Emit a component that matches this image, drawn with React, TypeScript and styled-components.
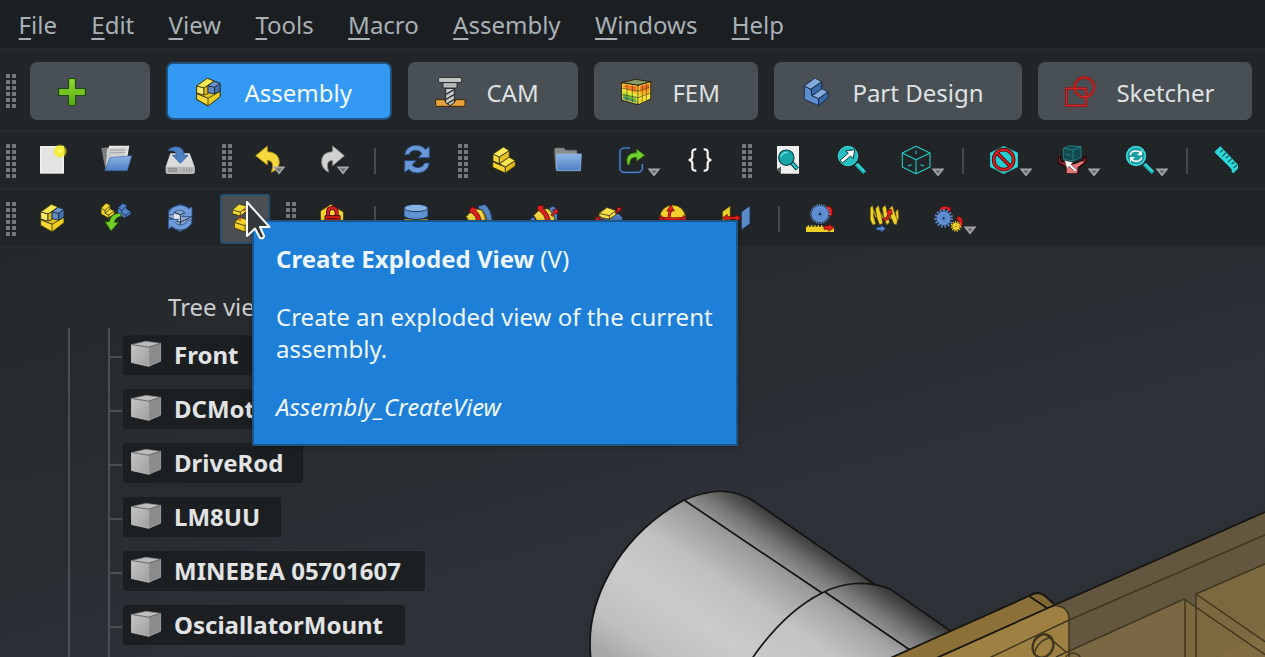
import React from 'react';
import styled, { createGlobalStyle, css } from 'styled-components';

const GlobalStyle = createGlobalStyle`
  * { box-sizing: border-box; }
  html, body { margin: 0; padding: 0; background: #212528; }
  body { overflow: hidden; }
`;

const Window = styled.div`
  position: relative;
  width: 1265px;
  height: 657px;
  overflow: hidden;
  display: flex;
  flex-direction: column;
  background: #212528;
  color: #dfe1e3;
  font-family: 'Noto Sans', sans-serif;
  font-size: 24px;
`;

const MenuBar = styled.nav`
  flex: none;
  height: 50px;
  display: flex;
  align-items: center;
  gap: 34.3px;
  padding: 0 0 0 18.6px;
  background: #1b1f22;
  border-bottom: 2px solid #25292b;
  color: #a9b0b6;
`;

const MenuItem = styled.span`
  line-height: 33px;
  white-space: nowrap;
`;

const Mnemonic = styled.span`
  text-decoration: underline;
  text-decoration-thickness: 2px;
  text-underline-offset: 4px;
  text-decoration-skip-ink: none;
`;

const ToolBar = styled.div<{ $height: number }>`
  flex: none;
  display: flex;
  align-items: center;
  height: ${(p) => p.$height}px;
  padding: 2px 0 0 6px;
  border-bottom: 2px solid #282c2f;
`;

const Grip = styled.div<{ $gap?: number }>`
  flex: none;
  width: 10px;
  height: 34px;
  margin-left: ${(p) => p.$gap ?? 0}px;
  background: repeating-linear-gradient(90deg, #74797b 0 4px, transparent 4px 6px);
  mask-image: repeating-linear-gradient(180deg, #000 0 4px, transparent 4px 6px);
`;

const Divider = styled.div<{ $gap: number }>`
  flex: none;
  width: 2px;
  height: 26px;
  margin-left: ${(p) => p.$gap}px;
  background: #484c4f;
`;

const WorkbenchTab = styled.button<{ $width: number; $active?: boolean; $gap?: number }>`
  flex: none;
  display: flex;
  align-items: center;
  gap: 21.4px;
  width: ${(p) => p.$width}px;
  height: 58px;
  margin: 0 0 0 ${(p) => p.$gap ?? 16}px;
  padding: 2px 0 0 27px;
  border: 0;
  border-radius: 7px;
  background: #495055;
  color: #dfe1e3;
  font: inherit;
  text-align: left;
  white-space: nowrap;
  ${(p) =>
    p.$active &&
    css`
      border: 2px solid #20517a;
      padding-left: 25px;
      background: #3399f2;
      color: #f4faff;
    `}
`;

const TabLabel = styled.span`
  line-height: 33px;
`;

const ToolButton = styled.button<{ $gap?: number; $hover?: boolean }>`
  position: relative;
  flex: none;
  display: flex;
  align-items: center;
  justify-content: center;
  width: 50px;
  height: 50px;
  margin: 0 0 0 ${(p) => p.$gap ?? 14}px;
  padding: 0 0 2px;
  border: 2px solid ${(p) => (p.$hover ? '#24506f' : 'transparent')};
  border-radius: 3px;
  background: ${(p) => (p.$hover ? '#4a4f54' : 'transparent')};
`;

const MenuArrow = styled.svg<{ $left: number; $top: number }>`
  position: absolute;
  left: ${(p) => p.$left}px;
  top: ${(p) => p.$top}px;
  width: 14px;
  height: 9px;
`;

const Svg = styled.svg`
  flex: none;
  display: block;
  width: 30px;
  height: 30px;
  overflow: visible;
`;

const Viewport = styled.main`
  position: relative;
  flex: 1;
  display: flex;
  flex-direction: column;
  background: linear-gradient(165deg, #24282a 0%, #272b2d 22%, #2a2e33 45%, #2d3138 62%, #2c3236 100%);
`;

const Scene = styled.svg`
  position: absolute;
  inset: 0;
  width: 1265px;
  height: 409px;
`;

const TreeTitle = styled.div`
  position: relative;
  height: 80px;
  padding: 42px 0 0 168px;
  line-height: 33px;
  color: #c9cccf;
`;

const TreeTrunk = styled.div`
  position: relative;
  flex: 1;
  display: flex;
  margin-left: 68px;
  border-left: 2px solid #4b4f54;
  padding-left: 38px;
`;

const TreeBranch = styled.div`
  flex: 1;
  display: flex;
  flex-direction: column;
  border-left: 2px solid #4b4f54;
`;

const TreeRow = styled.div`
  flex: none;
  height: 54px;
  display: flex;
  align-items: center;
  &::before {
    content: '';
    width: 12px;
    height: 2px;
    margin: 4px 1px 0 0;
    background: #4b4f54;
  }
`;

const TreeChip = styled.div<{ $width: number }>`
  display: flex;
  align-items: center;
  width: ${(p) => p.$width}px;
  height: 40px;
  gap: 13px;
  padding-left: 8px;
  border-radius: 3px;
  background: #1b1f21;
`;

const TreeLabel = styled.span`
  margin-bottom: 2px;
  color: #e2e3e4;
  font-weight: 700;
  line-height: 33px;
  white-space: nowrap;
`;

const Tooltip = styled.div`
  position: absolute;
  left: 252px;
  top: 220px;
  width: 486px;
  height: 226px;
  padding: 21px 20px 0 22px;
  border: 2px solid #1f5585;
  background: #1d7fd7;
  color: #eef7ff;
  line-height: 32px;
  box-shadow: 0 1px 5px rgba(0, 0, 0, 0.3);
`;

const TipText = styled.p`
  margin: 0 0 26px;
`;

const Cursor = styled.svg`
  position: absolute;
  left: 244px;
  top: 198px;
  width: 30px;
  height: 44px;
  overflow: visible;
`;

type IconProps = { x: number; y?: number; children: React.ReactNode };

/* Icon artwork is drawn on a 90-unit square whose origin is given by x and y. */
const Icon = ({ x, y = 45, children }: IconProps) => (
  <Svg viewBox={`${x} ${y} 90 90`}>{children}</Svg>
);

const Arrow = ({ left = 39, top = 30 }: { left?: number; top?: number }) => (
  <MenuArrow $left={left} $top={top} viewBox="0 0 14 9">
    <path d="M0.5 0.5H13.5L7 8.6Z" fill="#a5a7a8" />
    <path d="M4 2.3H10L7 6Z" fill="#6d7072" />
  </MenuArrow>
);

const LBlock = ({ top, front, side, line }: { top: string; front: string; side: string; line: string }) => (
  <g stroke={line} strokeWidth="0.8" strokeLinejoin="round" transform="scale(3)">
    <path d="M3.3 9L10 12.3L11 18.7L17.7 21.7V28.7L3.3 22.3Z" fill={front} />
    <path d="M3.3 9L14 1L20.7 4.7L10 12.3Z" fill={top} />
    <path d="M10 12.3L20.7 4.7V12L11 18.7Z" fill={side} />
    <path d="M11 18.7L21 11.8L27 15L17.7 21.7Z" fill={top} />
    <path d="M17.7 21.7L27 15V20.7L17.7 28.7Z" fill={side} />
  </g>
);

/* Yellow part made of two stacked blocks. */
const PartArt = () => (
  <g stroke="#332d08" strokeWidth="2.4" strokeLinejoin="round">
    <path d="M14 50L34 59L52 66V84L14 67Z" fill="#f2d32d" />
    <path d="M34 56L63 36L82 47L52 66Z" fill="#f8e550" />
    <path d="M52 66L82 47V63L52 84Z" fill="#ddb91c" />
    <path d="M15 27L34 36V56L15 48Z" fill="#f6da38" />
    <path d="M15 27L46 6L64 17L34 36Z" fill="#faea5c" />
    <path d="M34 36L64 17V36L34 56Z" fill="#e3c222" />
  </g>
);

const AssemblyArt = () => (
  <g stroke="#2c2a0c" strokeWidth="2.4" strokeLinejoin="round">
    <path d="M11 27L43 4L81 19V59L45 87L11 67Z" fill="#e6c722" />
    <path d="M11 27L43 4L63 12L33 33Z" fill="#faec52" />
    <path d="M11 27L33 33V54L11 48Z" fill="#f9e76a" />
    <path d="M33 33L45 25V50L33 54Z" fill="#e0c020" />
    <path d="M11 50L45 64L81 43V59L45 87L11 67Z" fill="#f0cf25" />
    <path d="M11 50L45 64V86L11 67Z" fill="#f6d836" />
    <path d="M45 27L63 13L81 19L65 31Z" fill="#6d94cc" stroke="#142338" />
    <path d="M45 27L65 31V51L45 47Z" fill="#6189c4" stroke="#142338" />
    <path d="M65 31L81 19V42L65 51Z" fill="#4570ad" stroke="#142338" />
  </g>
);

const PlusIcon = () => (
  <Icon x={171} y={231}>
    <defs>
      <linearGradient id="plus" x1="0" y1="0" x2="0" y2="1">
        <stop offset="0" stopColor="#97dc3c" />
        <stop offset="1" stopColor="#55a708" />
      </linearGradient>
    </defs>
    <path d="M206 236H226V266H256V286H226V316H206V286H176V266H206Z" fill="url(#plus)" stroke="#1d4a06" strokeWidth="4" />
    <path d="M209 239H223V269H253V283H223V313H209V283H179V269H209Z" fill="none" stroke="#8ee23a" strokeWidth="1.6" />
  </Icon>
);

const CamIcon = () => (
  <Icon x={105} y={231}>
    <path d="M107 299H195V319H107Z" fill="#e9a23b" stroke="#3a2405" strokeWidth="3" />
    <path d="M131 299L138 310L150 318L163 310L170 299Z" fill="#4a3a22" />
    <path d="M137 265H163V308L150 317L137 308Z" fill="#c9ccca" stroke="#24282a" strokeWidth="3" />
    <path d="M138 283L162 269M138 298L162 284M142 311L162 299" stroke="#2c3032" strokeWidth="4" />
    <path d="M129 248H171V264H129Z" fill="#c3c6c4" stroke="#24282a" strokeWidth="3" />
    <path d="M116 233H184V247H116Z" fill="#e1e3e1" stroke="#24282a" strokeWidth="3" />
    <path d="M121 240H179M134 256H166" stroke="#9ea3a1" strokeWidth="3" />
  </Icon>
);

const FemIcon = () => (
  <Icon x={663} y={231}>
    <defs>
      <linearGradient id="femL" x1="0.6" y1="0" x2="0.3" y2="1">
        <stop offset="0" stopColor="#f3301a" />
        <stop offset="0.25" stopColor="#ff7a1c" />
        <stop offset="0.45" stopColor="#f3ee3a" />
        <stop offset="0.65" stopColor="#6bc23a" />
        <stop offset="0.85" stopColor="#2d5c9c" />
      </linearGradient>
      <linearGradient id="femR" x1="0" y1="0" x2="0" y2="1">
        <stop offset="0" stopColor="#f0351c" />
        <stop offset="0.4" stopColor="#ff9a1c" />
        <stop offset="0.7" stopColor="#f7ee3a" />
        <stop offset="1" stopColor="#d5b01e" />
      </linearGradient>
    </defs>
    <path d="M665 248L707 238L752 245L714 256Z" fill="#8b9a68" stroke="#26240a" strokeWidth="3" />
    <path d="M665 248L714 256V314L665 301Z" fill="url(#femL)" stroke="#26240a" strokeWidth="3" />
    <path d="M714 256L752 245V297L714 314Z" fill="url(#femR)" stroke="#26240a" strokeWidth="3" />
    <path d="M668 252L711 259V310L668 298Z" fill="none" stroke="#f5e544" strokeWidth="3" />
    <path d="M717 259L749 249V295L717 310Z" fill="none" stroke="#f5e544" strokeWidth="3" />
    <path d="M681 252V303M697 254V307M667 265L714 273L751 261M727 254V307M739 251V302M667 284L714 293L751 279" fill="none" stroke="#37320c" strokeWidth="1.6" />
  </Icon>
);

const SketchIcon = () => (
  <Icon x={915} y={81}>
    <g fill="none">
      <path d="M919 115H978V167H919Z" stroke="#9c0c0c" strokeWidth="7" />
      <circle cx="973" cy="112" r="29.5" stroke="#9c0c0c" strokeWidth="7" />
      <path d="M919 115H978V167H919Z" stroke="#f22c2c" strokeWidth="2.8" />
      <circle cx="973" cy="112" r="29.5" stroke="#f22c2c" strokeWidth="2.8" />
    </g>
  </Icon>
);

const NewIcon = () => (
  <Icon x={111}>
    <defs>
      <radialGradient id="glow">
        <stop offset="0" stopColor="#fffb8a" />
        <stop offset="0.5" stopColor="#f7ee26" />
        <stop offset="0.8" stopColor="#f4ea20" stopOpacity="0.55" />
        <stop offset="1" stopColor="#f4ea20" stopOpacity="0" />
      </radialGradient>
    </defs>
    <path d="M120 48H192V131H120Z" fill="#f0f0ef" />
    <path d="M125 53H187V126H125Z" fill="#e3e3e2" />
    <circle cx="180" cy="64" r="22" fill="url(#glow)" />
  </Icon>
);

const OpenIcon = () => (
  <Icon x={303}>
    <defs>
      <linearGradient id="fold" x1="0" y1="0" x2="0" y2="1">
        <stop offset="0" stopColor="#8db6e6" />
        <stop offset="1" stopColor="#4c7fc2" />
      </linearGradient>
    </defs>
    <path d="M304 54L330 52L385 70L372 118H316Z" fill="#7c7e7e" />
    <path d="M327 47H388L380 90L318 108Z" fill="#e4e5e5" />
    <path d="M321 56L376 52L372 84L318 112Z" fill="#cfd0d0" />
    <path d="M330 60H380M329 68H377M328 76H330" stroke="#a3a5a6" strokeWidth="3" />
    <path d="M330 83L395 77L382 122H314Z" fill="url(#fold)" stroke="#3465a4" strokeWidth="2" />
  </Icon>
);

const SaveIcon = () => (
  <Icon x={495}>
    <path d="M511 70H569L584 110V126Q584 131 579 131H502Q497 131 497 126V110Z" fill="#dadbdb" />
    <path d="M498 110H583V127Q583 131 579 131H502Q498 131 498 127Z" fill="#b7b9b9" />
    <path d="M506 115H530V124H506ZM552 115V126M560 115V126M568 115V126M575 115V126" stroke="#7f8282" strokeWidth="2" fill="#9fa1a1" />
    <path d="M503 62Q518 46 538 52Q552 58 552 76H564L541 100L518 76H529Q530 60 503 62Z" fill="#4f82c4" stroke="#2b5596" strokeWidth="2.4" />
  </Icon>
);

const UndoIcon = () => (
  <Icon x={756}>
    <path d="M767 77L802 48V65Q838 67 838 98Q836 118 814 127Q826 92 802 91V105Z" fill="#f5d83c" stroke="#b38f0b" strokeWidth="2.4" />
  </Icon>
);

const RedoIcon = () => (
  <Icon x={954}>
    <path d="M1033 77L998 48V65Q963 67 965 98Q967 118 986 126Q974 92 998 91V107Z" fill="#d0d1d1" stroke="#909393" strokeWidth="2.4" />
  </Icon>
);

const RefreshArt = () => (
  <g fill="#6a97d6" stroke="#26508f" strokeWidth="2.4">
    <path d="M104 75Q108 48 138 46Q158 46 166 58L178 50V83H145L156 70Q148 60 136 61Q120 62 118 73Z" />
    <path d="M178 99Q174 126 144 129Q124 129 116 118L104 127V92H138L126 105Q134 114 146 113Q160 111 164 99Z" />
  </g>
);

const FolderIcon = () => (
  <Icon x={549}>
    <path d="M553 60Q553 54 558 54H580Q585 54 586 60L621 61V116H557Z" fill="#8a8c8c" stroke="#5d6060" strokeWidth="2" />
    <path d="M560 72H634L631 122H560Z" fill="url(#fold)" stroke="#8fb8e8" strokeWidth="2.4" />
  </Icon>
);

const ExportIcon = () => (
  <Icon x={741}>
    <path d="M780 54H764Q750 54 750 68V114Q750 127 763 127H803Q817 127 817 114V102" fill="none" stroke="#1b3c66" strokeWidth="8" />
    <path d="M780 54H764Q750 54 750 68V114Q750 127 763 127H803Q817 127 817 114V102" fill="none" stroke="#6fa1dc" strokeWidth="2.6" />
    <path d="M772 104Q764 68 800 68V57L824 76L800 93V82Q778 80 779 104Z" fill="#72d02c" stroke="#2c7409" strokeWidth="2.4" />
  </Icon>
);

const BracesIcon = () => (
  <Icon x={945}>
    <g fill="none" stroke="#f6f6f6" strokeWidth="6.5">
      <path d="M979 58Q967 57 967 67V80Q967 89 956 90Q967 91 967 100V113Q967 123 979 122" />
      <path d="M1001 58Q1013 57 1013 67V80Q1013 89 1024 90Q1013 91 1013 100V113Q1013 123 1001 122" />
    </g>
  </Icon>
);

const FitIcon = () => (
  <Icon x={129}>
    <path d="M141 48H207V131H153L141 117Z" fill="#eeefee" />
    <path d="M141 117L153 110V131Z" fill="#55595a" />
    <path d="M183 96L202 117" stroke="#0b3a3c" strokeWidth="13" />
    <path d="M183 96L201 115" stroke="#1fc8cc" strokeWidth="7" />
    <circle cx="169" cy="83" r="23" fill="#16a7ab" stroke="#0b4547" strokeWidth="3.6" />
    <path d="M152 80Q158 66 173 67" stroke="#6fe6e6" strokeWidth="4" fill="none" />
  </Icon>
);

const ZoomSelIcon = () => (
  <Icon x={321}>
    <path d="M379 102L404 128" stroke="#17b8bc" strokeWidth="12" />
    <path d="M381 102L403 124" stroke="#5ff1f1" strokeWidth="3" />
    <circle cx="354" cy="78" r="29" fill="#23bfc3" stroke="#40dcde" strokeWidth="3" />
    <path d="M330 91L355 70L347 63L374 59L370 86L362 78L338 98Z" fill="#fff" stroke="#14393b" strokeWidth="3" />
  </Icon>
);

const IsoIcon = () => (
  <Icon x={513}>
    <g fill="none" stroke="#22cfc9" strokeWidth="3.2" strokeLinejoin="round">
      <path d="M517 69L558 49L600 69V111L558 131L517 111ZM517 69L558 89L600 69M558 89V131" />
      <path d="M558 62V72M534 108L545 104M571 104L582 108" />
    </g>
  </Icon>
);

const NoDrawIcon = () => (
  <Icon x={57}>
    <path d="M60 68L101 48L144 68V111L101 132L60 111Z" fill="#25cdd1" />
    <path d="M66 72L101 54L138 72V108L101 126L66 108Z" fill="none" stroke="#54e8ea" strokeWidth="2" />
    <g fill="none">
      <circle cx="101" cy="89" r="30" stroke="#4a0a0a" strokeWidth="11" />
      <path d="M80 68L122 110" stroke="#4a0a0a" strokeWidth="11" />
      <circle cx="101" cy="89" r="30" stroke="#d81d20" strokeWidth="6" />
      <path d="M80 68L122 110" stroke="#d81d20" strokeWidth="6" />
    </g>
  </Icon>
);

const BoxSelectIcon = () => (
  <Icon x={261}>
    <path d="M265 82V98L289 113V130H325V112L348 97V81H340V93L320 100H294L272 93V82Z" fill="#a02a2c" stroke="#240606" strokeWidth="4" />
    <path d="M290 130V112L325 98L340 92V99L322 112V130Z" fill="#e67a7b" />
    <path d="M280 55L298 47L333 50V82L309 93L281 88Z" fill="#124a4f" stroke="#2a9ea2" strokeWidth="2" />
    <path d="M280 55L309 60L333 50M309 60V93M287 72L302 76" fill="none" stroke="#2a9ea2" strokeWidth="2" />
    <path d="M283 91L310 97L303 103L321 121L316 126L297 109L291 116Z" fill="#fff" stroke="#2a2a2a" strokeWidth="1.6" />
  </Icon>
);

const ZoomRefreshIcon = () => (
  <Icon x={465}>
    <path d="M523 102L549 128" stroke="#17b8bc" strokeWidth="12" />
    <path d="M525 102L548 124" stroke="#5ff1f1" strokeWidth="3" />
    <circle cx="498" cy="78" r="28" fill="#1a9da2" stroke="#3bdadc" strokeWidth="5" />
    <g fill="none" stroke="#fff" strokeWidth="5">
      <path d="M481 75Q483 62 499 63Q507 63 511 68" />
      <path d="M515 82Q512 94 498 94Q489 94 485 88" />
    </g>
    <path d="M516 60V76H501ZM480 96V81H495Z" fill="#fff" />
  </Icon>
);

const RulerIcon = () => (
  <Icon x={726}>
    <path d="M733 66L751 49L804 104V115L791 130L785 125V118Z" fill="#2cd9dc" />
    <path d="M759 59L750 67M768 68L757 79M776 77L768 84M785 86L774 97M794 95L785 102M802 104L791 114" stroke="#12484b" strokeWidth="3.4" />
  </Icon>
);

const InsertIcon = () => (
  <Icon x={303} y={219}>
    <g strokeWidth="2.4" strokeLinejoin="round">
      <path d="M303 235L318 219L331 226L330 236L343 243V252L325 264L303 252Z" fill="#f2d62f" stroke="#3a330a" />
      <path d="M303 235L315 241L331 227M315 241V250L326 255L343 243M326 255V263M316 249L330 237" fill="none" stroke="#3a330a" />
      <path d="M353 234L368 220L381 226L380 237L393 244V252L375 265L353 252Z" fill="#4f80c4" stroke="#13233c" />
      <path d="M353 234L365 241L381 227M365 241V250L377 256L393 244M377 256V264" fill="none" stroke="#13233c" />
      <path d="M360 250Q332 250 328 275H315L333 303L356 277H343Q346 262 364 258Z" fill="#72cf26" stroke="#215c07" />
    </g>
  </Icon>
);

const RecomputeIcon = () => (
  <Icon x={495} y={219}>
    <path d="M505 239L541 222L576 237V282L541 305L505 288Z" fill="#8fa9cb" stroke="#1d3150" strokeWidth="2.6" />
    <path d="M522 252L541 256V276L522 270Z" fill="#e3e7ec" />
    <path d="M505 239L541 254L576 237M541 254V303M507 262L541 277L575 260" fill="none" stroke="#1d3150" strokeWidth="3" />
    <g fill="#6e9cda" stroke="#1f4682" strokeWidth="2.4">
      <path d="M504 254Q508 230 538 226Q560 226 566 237L576 230V260H546L556 250Q550 240 538 241Q522 243 519 254Z" />
      <path d="M577 270Q572 296 544 300Q524 300 516 289L505 298V268H536L526 278Q532 286 544 285Q558 283 563 270Z" />
    </g>
  </Icon>
);

const ExplodeIcon = () => (
  <Icon x={690} y={219}>
    <g stroke="#3a330a" strokeWidth="2.6" strokeLinejoin="round">
      <path d="M697 240L717 222L742 229V242L721 258L697 251Z" fill="#f3da38" />
      <path d="M697 240L721 246L742 230M721 246V258" fill="none" />
      <path d="M703 277L720 262L750 272V292L736 306L703 294Z" fill="#f0cf28" />
      <path d="M703 277L735 287L750 273M735 287V305" fill="none" />
      <path d="M720 260V272M731 242L737 238" stroke="#d4281a" strokeWidth="4" />
    </g>
  </Icon>
);

const LockIcon = () => (
  <Icon x={948} y={219}>
    <path d="M961 243L992 223L1031 246V300L961 290Z" fill="#f2d62f" stroke="#3a330a" strokeWidth="3" />
    <path d="M984 258V247Q984 234 997 234Q1010 234 1010 247V258" fill="none" stroke="#4c0808" strokeWidth="12" />
    <path d="M984 260V247Q984 234 997 234Q1010 234 1010 247V260" fill="none" stroke="#dc2020" strokeWidth="7" />
    <path d="M975 257H1020V300H975Z" fill="#dc2020" stroke="#4c0808" strokeWidth="3" />
    <path d="M980 266H1014" stroke="#4c0808" strokeWidth="3" />
  </Icon>
);

const CylinderIcon = () => (
  <Icon x={93} y={219}>
    <path d="M102 268H174V300H102Z" fill="#ecd02a" />
    <path d="M102 234V258Q110 268 138 268Q166 268 174 258V234Z" fill="#5f92d2" stroke="#16294a" strokeWidth="2.6" />
    <ellipse cx="138" cy="234" rx="36" ry="11" fill="#86b2e4" stroke="#16294a" strokeWidth="2.6" />
  </Icon>
);

const RevoluteIcon = () => (
  <Icon x={285} y={219}>
    <path d="M324 228L345 223Q364 238 368 275H340Z" fill="#5485c6" stroke="#16294a" strokeWidth="2.6" />
    <path d="M288 260L312 235L335 240Q350 252 350 280H300Z" fill="#f2d840" stroke="#3a330a" strokeWidth="2.6" />
    <path d="M330 236Q345 250 347 275" fill="none" stroke="#3a330a" strokeWidth="2.6" />
    <path d="M297 246L303 230L320 234L316 240Q332 254 334 276H322Q318 258 306 249Z" fill="#dc1f1f" stroke="#4c0808" strokeWidth="2.4" />
  </Icon>
);

const CylindricalIcon = () => (
  <Icon x={477} y={219}>
    <path d="M480 268L490 260L505 280H484Z" fill="#5485c6" stroke="#16294a" strokeWidth="2.4" />
    <path d="M538 234L550 228L562 240V275H545Z" fill="#5485c6" stroke="#16294a" strokeWidth="2.4" />
    <path d="M491 256L510 238L534 236Q554 250 556 280H505Z" fill="#f2d840" stroke="#3a330a" strokeWidth="2.6" />
    <path d="M501 240L505 225L523 228L519 235Q538 250 541 276H529Q524 254 509 243Z" fill="#dc1f1f" stroke="#4c0808" strokeWidth="2.4" />
    <path d="M542 254L552 246L548 240L564 237V252L558 249L547 259Z" fill="#dc1f1f" stroke="#4c0808" strokeWidth="2" />
  </Icon>
);

const SliderIcon = () => (
  <Icon x={669} y={219}>
    <path d="M680 260L745 250L757 262V290H680Z" fill="#4c7fc4" stroke="#16294a" strokeWidth="2.6" />
    <path d="M687 250L711 232L738 242V254L718 268L687 262Z" fill="#f5df48" stroke="#3a330a" strokeWidth="2.6" />
    <path d="M687 250L718 257L738 242M718 257V268" fill="none" stroke="#3a330a" strokeWidth="2.6" />
    <path d="M735 248L743 240L738 234L753 231L752 246L747 243L741 250Z" fill="#dc1f1f" stroke="#4c0808" strokeWidth="2" />
    <path d="M673 276L677 262L692 260L687 268H700V276Z" fill="#dc1f1f" stroke="#4c0808" strokeWidth="2" />
  </Icon>
);

const BallIcon = () => (
  <Icon x={861} y={219}>
    <circle cx="908" cy="264" r="39" fill="#f1d12a" stroke="#3a330a" strokeWidth="2.6" />
    <path d="M869 264Q908 270 947 264M899 280Q894 254 903 240" fill="none" stroke="#5a0808" strokeWidth="9" />
    <path d="M869 264Q908 270 947 264M899 280Q894 254 903 240" fill="none" stroke="#e01f1f" strokeWidth="6" />
    <path d="M890 243L903 224L913 243ZM866 270L874 256L882 272ZM934 272L941 256L950 270Z" fill="#e01f1f" stroke="#5a0808" strokeWidth="2" />
  </Icon>
);

const DistanceIcon = () => (
  <Icon x={-27} y={219}>
    <path d="M-23 245L1 227V287L-23 300Z" fill="#ecd02a" stroke="#3a330a" strokeWidth="2.4" />
    <path d="M34 246L60 227V281L34 300Z" fill="#5b8acb" stroke="#16294a" strokeWidth="2.4" />
    <path d="M-23 264L-8 253V260H16V254L34 264L16 274V268H-8V275Z" fill="#e01f1f" stroke="#5a0808" strokeWidth="2" />
  </Icon>
);

const Gear = ({ cx, cy, r, tooth, fill, hole }: { cx: number; cy: number; r: number; tooth: number; fill: string; hole: string }) => (
  <g>
    <circle cx={cx} cy={cy} r={r} fill={fill} />
    <circle cx={cx} cy={cy} r={r + tooth / 2} fill="none" stroke={fill} strokeWidth={tooth} strokeDasharray={`${tooth * 0.75} ${tooth * 0.72}`} />
    <circle cx={cx} cy={cy} r={r * 0.78} fill="none" stroke="#ffffff" strokeOpacity="0.14" strokeWidth="2" />
    <circle cx={cx} cy={cy} r={r * 0.16} fill={hole} />
  </g>
);

const RackIcon = () => (
  <Icon x={225} y={219}>
    <path d="M291 229Q304 226 307 240V251H311L301 259L292 249H297Q297 239 289 239Z" fill="#e01f1f" stroke="#5a0808" strokeWidth="2" />
    <Gear cx={270} cy={252} r={25} tooth={5} fill="#5b8bd0" hole="#16294a" />
    <path d="M228 290H233V286H237V290H243V286H247V290H253V286H257V290H263V286H267V290H273V286H277V290H312V306H228Z" fill="#f0cf25" />
    <path d="M282 288H296V282L312 293L296 304V298H282Z" fill="#e01f1f" stroke="#5a0808" strokeWidth="2" />
  </Icon>
);

const ScrewIcon = () => (
  <Icon x={417} y={219}>
    <g stroke="#6d5a06" strokeWidth="1.6" strokeLinejoin="round" fill="#f0d22b">
      <path d="M421 234L427 226L432 244L430 256L437 282L428 284L421 270Z" />
      <path d="M437 236L445 226L452 250L458 280L449 284L441 264Z" />
      <path d="M457 234L466 226L473 250L478 278L470 284L462 264Z" />
      <path d="M478 236L487 227L494 250L502 270L500 284L492 282L483 262Z" />
      <path d="M497 246L504 237L506 262L503 272L499 262Z" />
      <path d="M432 244L438 262M452 250L460 266M473 250L482 266" stroke="#b09512" strokeWidth="4" />
    </g>
    <path d="M459 266L469 262L474 250L468 244L484 237L487 253L481 253L474 268L464 274Z" fill="#e01f1f" stroke="#5a0808" strokeWidth="2" />
    <path d="M440 292H453V286L467 296L453 306V300H440Z" fill="#5b8bd0" stroke="#1f4682" strokeWidth="2" />
  </Icon>
);

const GearsIcon = () => (
  <Icon x={609} y={219}>
    <path d="M629 240Q630 230 644 229Q656 229 659 233L663 230L662 243L650 243L653 238Q644 235 640 241Z" fill="#e01f1f" stroke="#5a0808" strokeWidth="2" />
    <path d="M682 259Q697 260 698 275V282L692 290L684 281H688Q689 269 680 269Z" fill="#e01f1f" stroke="#5a0808" strokeWidth="2" />
    <Gear cx={641} cy={265} r={21} tooth={7} fill="#5b8bd0" hole="#111a28" />
    <Gear cx={678} cy={289} r={11} tooth={5} fill="#f0cf25" hole="#2b2608" />
  </Icon>
);

const CubeIcon = () => (
  <Svg viewBox="0 0 30 30">
    <defs>
      <linearGradient id="cubeFront" x1="0" y1="0" x2="1" y2="1">
        <stop offset="0" stopColor="#c4c4c4" />
        <stop offset="1" stopColor="#a0a0a0" />
      </linearGradient>
    </defs>
    <path d="M0.5 4.5L15 1.2L29.6 3.3L17.8 7.2Z" fill="#bdbdbd" stroke="#77797a" strokeWidth="0.6" />
    <path d="M0.5 4.5L17.8 7.2V26.3L0.5 22.5Z" fill="url(#cubeFront)" stroke="#c6c6c6" strokeWidth="0.8" />
    <path d="M17.8 7.2L29.6 3.3V21.2L17.8 26.3Z" fill="#8b8b8b" stroke="#a8a8a8" strokeWidth="0.8" />
    <path d="M0.5 4.5L17.8 7.2L29.6 3.3" fill="none" stroke="#5f6162" strokeWidth="0.9" />
  </Svg>
);

const MENU = ['File', 'Edit', 'View', 'Tools', 'Macro', 'Assembly', 'Windows', 'Help'];
const TREE = [
  { name: 'Front', width: 136 },
  { name: 'DCMotor', width: 176 },
  { name: 'DriveRod', width: 180 },
  { name: 'LM8UU', width: 158 },
  { name: 'MINEBEA 05701607', width: 302 },
  { name: 'OsciallatorMount', width: 282 },
];

const BLUE = { top: '#82abdc', front: '#5d8fd0', side: '#386aab', line: '#0f1d33' };

const Model = () => (
  <Scene viewBox="0 248 1265 409">
    <defs>
      <linearGradient id="barrel" gradientUnits="userSpaceOnUse" x1="590" y1="643" x2="707" y2="470">
        <stop offset="0" stopColor="#a8a8a8" />
        <stop offset="0.14" stopColor="#bfbfbf" />
        <stop offset="0.38" stopColor="#cbcbcb" />
        <stop offset="0.6" stopColor="#c0c0c0" />
        <stop offset="0.8" stopColor="#9a9a9a" />
        <stop offset="0.9" stopColor="#727272" />
        <stop offset="1" stopColor="#3c3c3c" />
      </linearGradient>
      <linearGradient id="collar" gradientUnits="userSpaceOnUse" x1="753" y1="657" x2="826" y2="549">
        <stop offset="0" stopColor="#c8c8c8" />
        <stop offset="0.35" stopColor="#c4c4c4" />
        <stop offset="0.65" stopColor="#a4a4a4" />
        <stop offset="0.82" stopColor="#777777" />
        <stop offset="1" stopColor="#3c3c3c" />
      </linearGradient>
    </defs>
    <g stroke="#141414" strokeWidth="1.7" strokeLinejoin="round">
      <path d="M591 660Q590 652 590 643C590 605 612 540 684 500C710 489 733 487 755 502L874 584L900 660Z" fill="url(#barrel)" />
      <path d="M751 660Q784 612 822 593C843 582 868 580 890 589L952 632L920 662Z" fill="url(#collar)" />
      <path d="M684 500L822 593M825 592L910 650" fill="none" />
    </g>
    <path d="M1048 608L1265 512V660H1048Z" fill="#63573f" />
    <path d="M1056 657L1184 599V660H1056Z" fill="#7a6844" />
    <path d="M1184 599L1265 655V660H1184Z" fill="#7c6940" />
    <path d="M1196 594L1265 564V660H1196Z" fill="#7d693f" />
    <path d="M1220 657L1265 630V660Z" fill="#826d40" />
    <path d="M886 660L950 631L1029 596Q1037 591 1045 596L1054 604L1048 608L939 660Z" fill="#8b7137" />
    <path d="M1030 596Q1038 591 1045 596L1056 605L1047 608Z" fill="#806733" />
    <path d="M932 660L1048 608Q1069 602 1069 620V660Z" fill="#9d8042" />
    <g fill="none" stroke="#17150f" strokeWidth="1.8">
      <path d="M886 660L1029 596Q1038 590 1045 596L1054 604M1029 596L1047 608M932 660L1048 608L1265 512" />
    </g>
    <g fill="none" stroke="#40361f" strokeWidth="1.5">
      <path d="M1057 606Q1069 607 1069 620V657M985 660L1069 620L1265 535M1056 657L1184 599L1270 658M1185 600V660M1265 564L1196 594V660M1196 594L1270 645" />
      <ellipse cx="1043" cy="646" rx="10" ry="12" transform="rotate(25 1043 646)" strokeWidth="2.4" />
      <path d="M1045 634L1066 652M1034 655Q1037 640 1052 637" />
      <ellipse cx="1073" cy="661" rx="8" ry="8" />
    </g>
  </Scene>
);

export default function App() {
  return (
    <Window>
      <GlobalStyle />
      <MenuBar>
        {MENU.map((label) => (
          <MenuItem key={label}>
            <Mnemonic>{label[0]}</Mnemonic>
            {label.slice(1)}
          </MenuItem>
        ))}
      </MenuBar>

      <ToolBar $height={82}>
        <Grip />
        <WorkbenchTab $width={120} $gap={14}><PlusIcon /></WorkbenchTab>
        <WorkbenchTab $width={226} $active>
          <Icon x={0} y={0}><AssemblyArt /></Icon>
          <TabLabel>Assembly</TabLabel>
        </WorkbenchTab>
        <WorkbenchTab $width={170}><CamIcon /><TabLabel>CAM</TabLabel></WorkbenchTab>
        <WorkbenchTab $width={164}><FemIcon /><TabLabel>FEM</TabLabel></WorkbenchTab>
        <WorkbenchTab $width={248}>
          <Icon x={0} y={0}><LBlock {...BLUE} /></Icon>
          <TabLabel>Part Design</TabLabel>
        </WorkbenchTab>
        <WorkbenchTab $width={214}><SketchIcon /><TabLabel>Sketcher</TabLabel></WorkbenchTab>
      </ToolBar>

      <ToolBar $height={58}>
        <Grip />
        <ToolButton $gap={11}><NewIcon /></ToolButton>
        <ToolButton><OpenIcon /></ToolButton>
        <ToolButton><SaveIcon /></ToolButton>
        <Grip $gap={17} />
        <ToolButton $gap={10}><UndoIcon /><Arrow left={28} top={28} /></ToolButton>
        <ToolButton $gap={16}><RedoIcon /><Arrow left={26} top={28} /></ToolButton>
        <Divider $gap={16} />
        <ToolButton $gap={15}><Icon x={93}><RefreshArt /></Icon></ToolButton>
        <Grip $gap={17} />
        <ToolButton $gap={10}><Icon x={0} y={0}><PartArt /></Icon></ToolButton>
        <ToolButton $gap={15}><FolderIcon /></ToolButton>
        <ToolButton><ExportIcon /><Arrow left={38} /></ToolButton>
        <ToolButton $gap={18}><BracesIcon /></ToolButton>
        <Grip $gap={17} />
        <ToolButton $gap={11}><FitIcon /></ToolButton>
        <ToolButton><ZoomSelIcon /></ToolButton>
        <ToolButton><IsoIcon /><Arrow left={38} /></ToolButton>
        <Divider $gap={21} />
        <ToolButton $gap={15}><NoDrawIcon /><Arrow left={38} /></ToolButton>
        <ToolButton $gap={18}><BoxSelectIcon /><Arrow left={38} /></ToolButton>
        <ToolButton $gap={18}><ZoomRefreshIcon /><Arrow left={38} /></ToolButton>
        <Divider $gap={21} />
        <ToolButton><RulerIcon /></ToolButton>
      </ToolBar>

      <ToolBar $height={58}>
        <Grip />
        <ToolButton $gap={11}><Icon x={0} y={0}><AssemblyArt /></Icon></ToolButton>
        <ToolButton><InsertIcon /></ToolButton>
        <ToolButton><RecomputeIcon /></ToolButton>
        <ToolButton $gap={15} $hover><ExplodeIcon /></ToolButton>
        <Grip $gap={16} />
        <ToolButton $gap={10}><LockIcon /></ToolButton>
        <Divider $gap={18} />
        <ToolButton $gap={15}><CylinderIcon /></ToolButton>
        <ToolButton><RevoluteIcon /></ToolButton>
        <ToolButton><CylindricalIcon /></ToolButton>
        <ToolButton><SliderIcon /></ToolButton>
        <ToolButton><BallIcon /></ToolButton>
        <ToolButton><DistanceIcon /></ToolButton>
        <Divider $gap={17} />
        <ToolButton $gap={15}><RackIcon /></ToolButton>
        <ToolButton><ScrewIcon /></ToolButton>
        <ToolButton><GearsIcon /><Arrow left={38} /></ToolButton>
      </ToolBar>

      <Viewport>
        <Model />
        <TreeTitle>Tree view</TreeTitle>
        <TreeTrunk>
          <TreeBranch>
            {TREE.map(({ name, width }) => (
              <TreeRow key={name}>
                <TreeChip $width={width}>
                  <CubeIcon />
                  <TreeLabel>{name}</TreeLabel>
                </TreeChip>
              </TreeRow>
            ))}
          </TreeBranch>
        </TreeTrunk>
      </Viewport>

      <Tooltip>
        <TipText><b>Create Exploded View</b> (V)</TipText>
        <TipText>Create an exploded view of the current assembly.</TipText>
        <TipText><i>Assembly_CreateView</i></TipText>
      </Tooltip>
      <Cursor viewBox="244 198 30 44">
        <path d="M247 202V236L255 228.5L260 238Q264 239 264 236L260 227H269.5Z" fill="#34383b" stroke="#fff" strokeWidth="2" strokeLinejoin="round" />
      </Cursor>
    </Window>
  );
}
